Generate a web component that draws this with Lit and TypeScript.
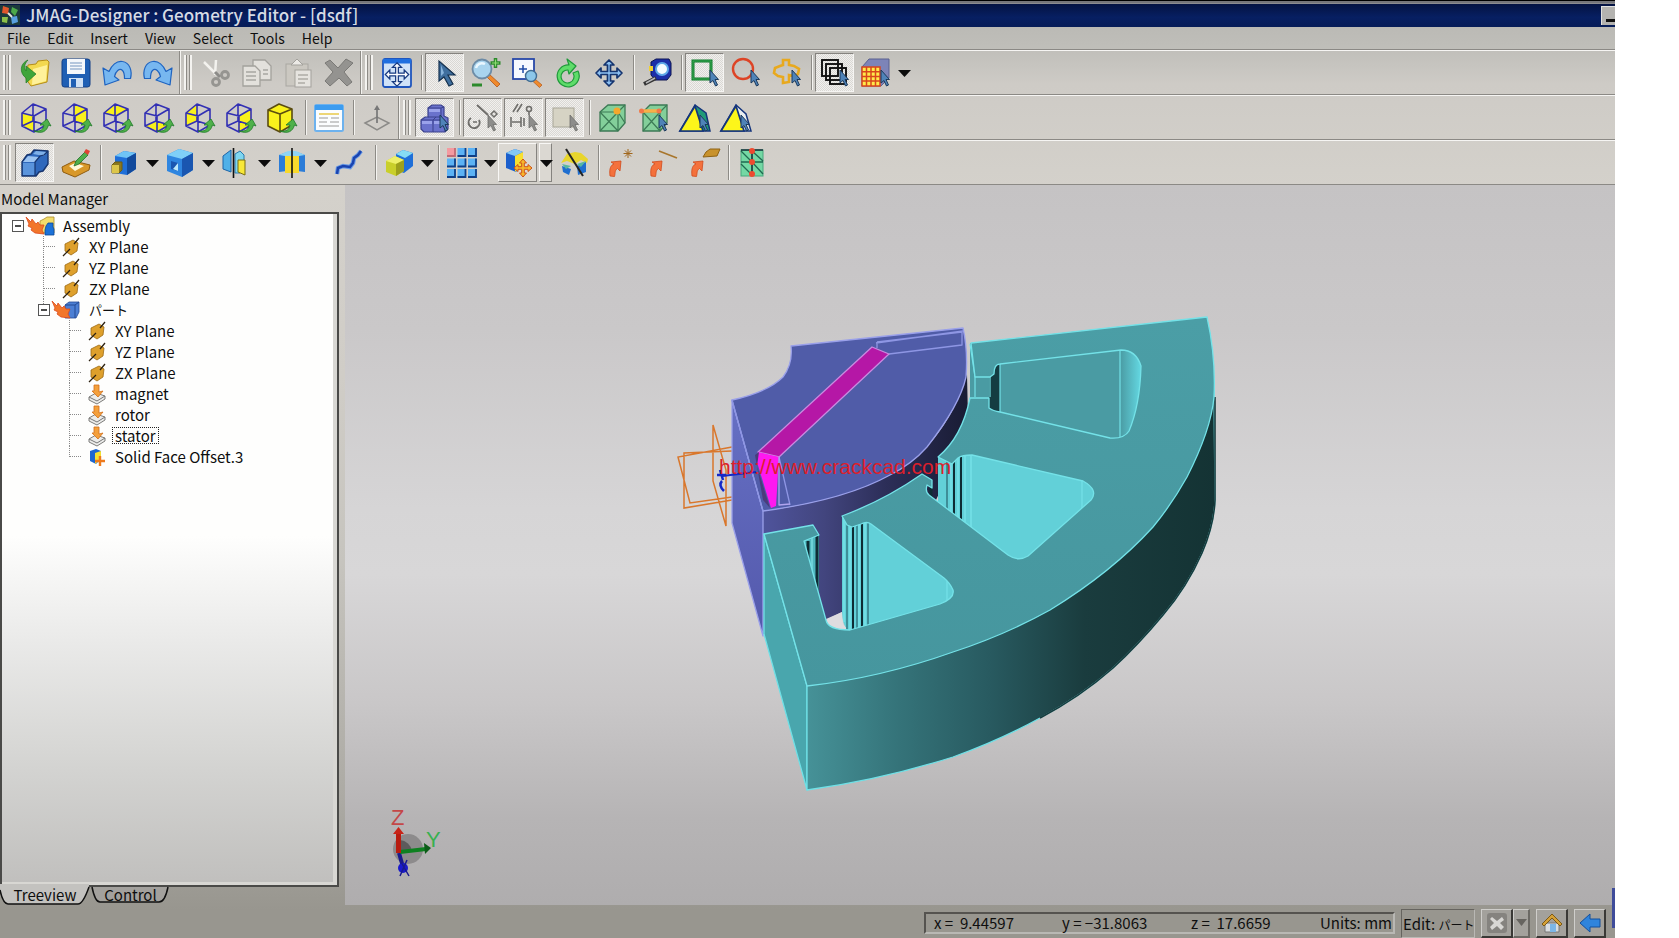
import { LitElement, html, svg, css, nothing } from "lit";
import type { SVGTemplateResult, TemplateResult } from "lit";
import { customElement, property } from "lit/decorators.js";
import { classMap } from "lit/directives/class-map.js";

/* ---------- icon pieces ---------- */

const pointer = svg`<path d="M20 12v13l3-2.500 2.500 5.500 2-1-2.500-5.500h3.500z" fill="#4f83b8" stroke="#1d3a5c" stroke-width="1"/>`;
const greyPointer = svg`<path d="M20 12v13l3-2.500 2.500 5.500 2-1-2.500-5.500h3.500z" fill="#8d8d8b" stroke="#6d6d6b" stroke-width=".8"/>`;
const turnArrow = svg`<path d="M14 28c7 .5 9-1 10-6h-4l7-6 4 7-2.500-1c-2 7-7 9-14.500 6z" fill="#4fb14a" stroke="#1f7a2a" stroke-width=".8"/>`;

const wireCube = (face: SVGTemplateResult) => svg`
  ${face}
  <path d="M2 10 13 1l13 5v16l-12 7-12-6zM2 10l12 3 12-7M14 13v16M13 1v17M2 23l11-5 13 4" fill="none" stroke="#3230b4" stroke-width="1.600" stroke-linejoin="round"/>
  ${turnArrow}`;

const fourWay = svg`<path d="M15 2l5 5h-3.500v6.500H23V10l5 5-5 5v-3.500h-6.500V23H20l-5 5-5-5h3.500v-6.500H7V20l-5-5 5-5v3.500h6.500V7H10z"/>`;

const redArrow = svg`<path d="M3 28c-1-8 1-11 4-12l-3-2 10-1-1 10-2.500-2.500c-3 2-2 4-3 8z" fill="#f4713c" stroke="#d04a1c" stroke-width=".8"/>`;

const icons: Record<string, SVGTemplateResult> = {
  open: svg`<path d="M8 7l8-1 2-3 9-1 2 2-2 20-16 4-5-7z" fill="#f3d84f" stroke="#b58d18"/><path d="M13 11l14-4-1 16-14 4z" fill="#fff19a"/><path d="M8 2C0 5-1 15 6 20v5l10-9-10-8v5c-2-3-2-7 2-11z" fill="#3fa53a" stroke="#1f7a24" stroke-width=".7"/>`,
  save: svg`<rect x="1" y="1" width="28" height="28" rx="2.500" fill="#1f5fb4" stroke="#123f86"/><rect x="6" y="1" width="18" height="15" fill="#f4f7fb"/><path d="M9 5h12M9 8h12M9 11h12" stroke="#9eb6d4" stroke-width="1.500"/><rect x="8" y="20" width="14" height="9" fill="#cfe0f4"/><rect x="10" y="21" width="5" height="8" fill="#1f5fb4"/>`,
  undo: svg`<path d="M1 10l2 17 14-5-4.500-3.500c1-5 5-9 8-6 2 2 2 4 2 8h6c2-8-1-16-8-17-6-1-11 4-13.500 10z" fill="#77b7f0" stroke="#1e63c0" stroke-width="1.200" stroke-linejoin="round"/>`,
  redo: svg`<path d="M29 10l-2 17-14-5 4.500-3.500c-1-5-5-9-8-6-2 2-2 4-2 8h-6c-2-8 1-16 8-17 6-1 11 4 13.500 10z" fill="#77b7f0" stroke="#1e63c0" stroke-width="1.200" stroke-linejoin="round"/>`,
  cut: svg`<path d="M3 4l13 13M15 2l-1 15" stroke="#f3f2ee" stroke-width="2.500"/><g fill="none" stroke="#969591" stroke-width="2.800"><circle cx="15" cy="24" r="3.500"/><circle cx="24" cy="17" r="3.500"/></g><path d="M14 14l5 5" stroke="#8c8b88" stroke-width="3"/>`,
  copy: svg`<g fill="#e3e1dc" stroke="#a3a19c" stroke-width="1.300"><path d="M11 2h12l6 6v14H11z"/><path d="M1 8h12l5 5v15H1z"/></g><path d="M4 14h10M4 18h10M4 22h10M21 12h5M21 16h5" stroke="#a8a6a1" stroke-width="1.500"/>`,
  paste: svg`<rect x="3" y="6" width="22" height="22" fill="#cbc8c1" stroke="#a9a7a2"/><path d="M14 1l6 6H8z" fill="#eceae6" stroke="#a3a19c"/><rect x="12" y="12" width="16" height="17" fill="#e6e4df" stroke="#a3a19c"/><path d="M15 17h10M15 21h10M15 25h7" stroke="#aeaca7" stroke-width="1.400"/>`,
  remove: svg`<path d="M6 2l8 8 8-9 7 4-9 9 8 10-5 4-8-8-9 8-5-5 8-9-8-9z" fill="#949390" stroke="#7a7976" stroke-linejoin="round"/>`,
  fit: svg`<rect x="1" y="1" width="28" height="28" rx="2" fill="#cfe2f8" stroke="#1f55bd" stroke-width="1.800"/><rect x="1" y="1" width="28" height="4.500" fill="#1f6fe0"/><g transform="translate(1.500 3) scale(.9)" fill="#fff" stroke="#173a80" stroke-width="1.400">${fourWay}</g>`,
  select: svg`<path d="M9 3v20l5-4 5 9 4-2-5-9h7z" fill="#3f6f9f" stroke="#14304e" stroke-width="1.200"/><path d="M11 7v11l3-3z" fill="#88b4dc"/>`,
  zoom: svg`<path d="M18 16l11 10-3 3-10-10z" fill="#f08a2c" stroke="#b0561a" stroke-width=".8"/><circle cx="11" cy="11" r="9.500" fill="#a9d4ee" stroke="#6c8ba6" stroke-width="1.800"/><path d="M5 10c1-4 5-6 9-4" stroke="#eaf7ff" stroke-width="2.500" fill="none"/><path d="M24.500 0v10M19.500 5h10" stroke="#2c8a2c" stroke-width="3.500"/><path d="M24.500 1.500v7M21 5h7" stroke="#8fdc72" stroke-width="1.200"/><path d="M1 27h10" stroke="#2c8a2c" stroke-width="3"/>`,
  zoomWindow: svg`<rect x="1" y="1" width="21" height="20" fill="#f6f9ff" stroke="#2748a8" stroke-width="1.800"/><path d="M11 7v8M7 11h8" stroke="#1f49a6" stroke-width="1.500"/><path d="M23 21l7 6-2.500 2.500-7-6.500z" fill="#f08a2c" stroke="#b0561a" stroke-width=".7"/><circle cx="19" cy="18" r="5.500" fill="#8cc7ea" stroke="#416c92" stroke-width="1.400"/>`,
  rotate: svg`<path d="M17 7a11 11 0 1 0 9 6l-5 2a6.500 6.500 0 1 1-5-3l1 4 7-8-9-7z" transform="translate(-1 0)" fill="#5fdc6a" stroke="#1f9a3a" stroke-width="1.200" stroke-linejoin="round"/>`,
  pan: svg`<g fill="#8cc0f2" stroke="#14336e" stroke-width="1.700" stroke-linejoin="round">${fourWay}</g>`,
  measure: svg`<path d="M9 4l5-3h13l2 4v12l-4 5H13l-4-5z" fill="#1c2fa8" stroke="#0c1550"/><circle cx="20" cy="11" r="6" fill="#f5fbff" stroke="#5fa8e8" stroke-width="2"/><rect x="7" y="8" width="4" height="5" fill="#f0d030"/><path d="M14 20L2 26" stroke="#333" stroke-width="4"/><path d="M13 20L4 25" stroke="#b8b8b8" stroke-width="1.500"/>`,
  rect: svg`<rect x="3" y="3" width="18" height="18" fill="none" stroke="#0f7a2a" stroke-width="3"/><rect x="3" y="3" width="18" height="18" fill="none" stroke="#48b860" stroke-width=".8"/>${pointer}`,
  circle: svg`<circle cx="12" cy="11" r="10" fill="none" stroke="#dd4426" stroke-width="2.400"/>${pointer}`,
  poly: svg`<path d="M11 2h6v5l5 1 5 3-1 5-4 2-5-1v7l-6 1v-6l-5-1-4-3 1-5 5-2 3-1z" fill="none" stroke="#e8a91e" stroke-width="2.600"/>${pointer}`,
  layers: svg`<g fill="none" stroke="#111" stroke-width="1.900"><rect x="2" y="2" width="16" height="16"/><rect x="6" y="6" width="16" height="16"/><rect x="10" y="10" width="16" height="16"/></g>${pointer}`,
  mesh: svg`<path d="M1 9l7-8h20v19l-8 8H1z" fill="#7d84b8" stroke="#5a618f"/><rect x="1" y="9" width="18" height="19" fill="#ffe94a" stroke="#d8461c" stroke-width="1.500"/><path d="M5.500 9v19M10 9v19M14.500 9v19M1 13.700h18M1 18.500h18M1 23h18" stroke="#d8461c" stroke-width="1.500"/>${pointer}`,

  front: wireCube(svg`<path d="M2 10l12 3v16l-12-6z" fill="#f9f11c"/>`),
  back: wireCube(svg`<path d="M13 1l13 5v16l-13-4z" fill="#f9f11c"/>`),
  top: wireCube(svg`<path d="M2 10 13 1l13 5-12 7z" fill="#f9f11c"/>`),
  bottom: wireCube(svg`<path d="M2 23l11-5 13 4-12 7z" fill="#f9f11c"/>`),
  left: wireCube(svg`<path d="M2 10 13 1v17l-11 5z" fill="#f9f11c"/>`),
  right: wireCube(svg`<path d="M14 13l12-7v16l-12 7z" fill="#f9f11c"/>`),
  iso: svg`<path d="M2 7 13 1l13 5v16l-12 7-12-6z" fill="#f9f11c"/><path d="M2 7 13 1l13 5v16l-12 7-12-6zM2 7l12 4 12-5M14 11v18" fill="none" stroke="#5a4c10" stroke-width="1.600" stroke-linejoin="round"/>${turnArrow}`,
  list: svg`<rect x="1" y="2" width="28" height="26" rx="1.500" fill="#fbfdff" stroke="#6db2ee" stroke-width="2"/><rect x="1" y="2" width="28" height="5" fill="#3c9cf0"/><path d="M5 11h20" stroke="#e8c84a" stroke-width="1.500"/><path d="M5 15h9M17 15h8M5 19h8M16 19h9M5 23h20" stroke="#9a9a9a" stroke-width="1.200"/>`,
  normal: svg`<path d="M3 20l12-6 12 6-12 7z" fill="none" stroke="#8c8b88" stroke-width="1.500"/><path d="M15 20V5" stroke="#777" stroke-width="1.700"/><path d="M12 7l3-5 3 5z" fill="#777"/>`,
  solids: svg`<path d="M8 5l4-3h9l3 2v9l4 2v11l-3 3H4l-3-3V17l4-3h3z" fill="#6a72cc" stroke="#3a418c" stroke-width="1.200"/><path d="M8 5h13v9H8M21 5l3-1M1 17h12v12M13 17h12M13 17l3-3M25 17v12" fill="none" stroke="#3a418c"/><path d="M9 6h11v3H9zM2 18h10v3H2zM14 18h10v3H14z" fill="#9aa2ea"/>${pointer}`,
  sketchFilter: svg`<g fill="none" stroke="#6f6e6b" stroke-width="2"><path d="M3 15a5.500 5.500 0 1 0 8 2"/><path d="M9 2l11 10"/><path d="M5 19h4M23 11l3-3 3 3-3 3z" stroke-width="1.500"/></g>${greyPointer}`,
  constraintFilter: svg`<g fill="none" stroke="#6f6e6b" stroke-width="1.600"><path d="M4 9l5-8M8 9l5-8M2 14v10M12 14v10M3 19h9M15 15v8"/><circle cx="20" cy="6" r="2.500"/><path d="M20 8v4"/></g>${greyPointer}`,
  regionFilter: svg`<rect x="3" y="5" width="21" height="19" fill="#d6d3c4" stroke="#a7a597"/>${greyPointer}`,
  vertex: svg`<path d="M2 9l8-7h17v18l-7 8H2z" fill="#83cf9a" stroke="#3c7a55" stroke-width="1.300"/><path d="M2 9h18v19M20 9l7-7M2 9l18 19M20 9L2 28M20 9l7 11" fill="none" stroke="#3c7a55" stroke-width="1.200"/><circle cx="19" cy="8" r="3.500" fill="#f6a82c"/>`,
  edge: svg`<path d="M4 9l7-7h17v18l-7 8H4z" fill="#83cf9a" stroke="#3c7a55" stroke-width="1.300"/><path d="M4 9h17v19M21 9l7-7M4 9l17 19M21 9L4 28" fill="none" stroke="#3c7a55" stroke-width="1.200"/><path d="M2 8h18" stroke="#f8b048" stroke-width="3.500"/><circle cx="2.500" cy="8" r="2.500" fill="#f27848"/><circle cx="20" cy="8" r="2.500" fill="#f27848"/>${pointer}`,
  face: svg`<path d="M15 2l11 8 4 18H0z" fill="#1f9a78" stroke="#15357c" stroke-width="1.500"/><path d="M15 3l8 25H0z" fill="#fdf61a" stroke="#15357c" stroke-width="1.700"/>${pointer}`,
  faceAll: svg`<path d="M15 2l10 9 5 17H0z" fill="#e9eef0" stroke="#15357c" stroke-width="1.500"/><path d="M15 3l8 25H0z" fill="#fdf61a" stroke="#15357c" stroke-width="1.700"/>${pointer}`,

  part: svg`<path d="M2 14l5-7 4-1 3-4 14 1v13l-5 7-4 1-3 4H2z" fill="#2f68bc" stroke="#17356e" stroke-width="1.400" stroke-linejoin="round"/><path d="M3 14l5-6 11 1-4 5z" fill="#9cc4f2"/><path d="M13 6l3-3 11 1-3 4z" fill="#7fb0e8"/><path d="M3 15h12v12H3z" fill="#5a94dc"/><path d="M15 28V14l5-6 4-1 4-4" fill="none" stroke="#17356e" stroke-width="1.200"/>`,
  sketch: svg`<path d="M1 19l12-6 16 4-1 5-14 7-12-5z" fill="#d8982a" stroke="#8f5c10"/><path d="M8 18l6-3 9 3-9 5z" fill="#fff8d8"/><path d="M13 18l2-5 9-9 3 3-9 9z" fill="#4fae4a" stroke="#21702a" stroke-width=".8"/><path d="M23 4l2-3 4 2-2 4z" fill="#e04434"/>`,
  extrude: svg`<path d="M6 8l9-5 12 2v16l-9 6-12-2z" fill="#1f6fd8"/><path d="M6 8l9-5 12 2-9 5z" fill="#6fc4f6"/><path d="M18 10l9-5v16l-9 6z" fill="#124a9c"/><path d="M3 17l3-3h7v8l-3 3H3z" fill="#8a7820" stroke="#6e5c10"/><path d="M3 17h7v8H3z" fill="#dcc64a"/>`,
  boxCut: svg`<path d="M2 7l12-6 14 4v17l-11 7L2 23z" fill="#2f86e0"/><path d="M2 7l12-6 14 4-11 6z" fill="#7fd0f8"/><path d="M17 11l11-6v17l-11 7z" fill="#1a56b0"/><path d="M6 13l7 2v8l-7-2z" fill="#1a56b0"/><path d="M13 15v8l-5-2z" fill="#bde8fa"/>`,
  mirror: svg`<path d="M2 8l8-6v22l-8-3z" fill="#4fb0e8" stroke="#1d64a8"/><path d="M14 6l5-3 4 4v8l-4 10h-5z" fill="#7fd6f0" stroke="#2a7ab0"/><path d="M17 12h7v15l-7-3z" fill="#f8e838" stroke="#7a6e10"/><path d="M12.500 0v30" stroke="#111" stroke-width="1.600"/>`,
  pattern: svg`<path d="M2 7l8-3v19l-8 1zM20 4l8 3v17l-8-1z" fill="#2b7cd8"/><path d="M8 5h14v20H8z" fill="#f8d92c"/><path d="M2 7l9-4h8l9 4-6 1H8z" fill="#8fd4f4"/><path d="M15 0v30" stroke="#111" stroke-width="1.600"/>`,
  curve: svg`<path d="M4 26l1-6 5-2 7 1 3-4 1-5 4-3 3-4" fill="none" stroke="#6a9be6" stroke-width="4.500"/><path d="M4 26l1-6 5-2 7 1 3-4 1-5 4-3 3-4" fill="none" stroke="#1a44b0" stroke-width="2.500"/>`,
  blend: svg`<path d="M12 6l7-4 10 3v13l-9 7-8-3z" fill="#1f6fd8"/><path d="M12 6l7-4 10 3-8 5z" fill="#86dcf4"/><path d="M2 13l9-5 9 4v11l-8 5-10-4z" fill="#c9cf2a"/><path d="M2 13l9-5 9 4-8 4z" fill="#eef06a"/><path d="M12 16l8-4v11l-8 5z" fill="#9da01c"/>`,
  grid: svg`${[0, 1, 2].map((r) => [0, 1, 2].map((c) => svg`<rect x="${c * 10.5}" y="${r * 10.5}" width="8.500" height="8.500" fill="${r + c ? "#5cb2f4" : "#f49aa0"}"/><path d="M${c * 10.5} ${8 + r * 10.5}h8v-8" fill="none" stroke="${r + c ? "#0f3f86" : "#c06a74"}" stroke-width="1.800"/>`))}`,
  offset: svg`<path d="M3 5l9-4 8 3v12l-7 8-10-4z" fill="#1c5fcc"/><path d="M3 5l9-4 8 3-8 4z" fill="#84c8f4"/><path d="M12 8l8-4v12l-8 8z" fill="#f8e030"/><path d="M20 11l3.500 4h-2.200v3.700h3.700v-2.200l4 3.500-4 3.500v-2.200h-3.700v3.700h2.200l-3.500 4-3.500-4h2.200v-3.700h-3.700v2.200l-4-3.500 4-3.500v2.200h3.700v-3.700h-2.200z" fill="#f6b82c" stroke="#d05018" stroke-width="1"/>`,
  cutPlane: svg`<path d="M2 15l6-9 8-2 6 1 7 6-1 4-6-3-6 4-8-3z" fill="#e8d52c"/><path d="M3 18l9 3-2 6-6-3zM18 18l9-4v10l-8 3z" fill="#1f6fd0"/><path d="M3 16l9 2-5 3zM18 16l9-3-5 6z" fill="#58b8a0"/><path d="M7 1l17 27" stroke="#222" stroke-width="2"/>`,
  refPoint: svg`${redArrow}<path d="M21 1v9M16.500 5.500h9M18 2.500l6 6M24 2.500l-6 6" stroke="#a0661c" stroke-width="1"/>`,
  refAxis: svg`${redArrow}<path d="M11 3l18 7" stroke="#a8762c" stroke-width="1.600"/>`,
  refPlane: svg`${redArrow}<path d="M17 4l4-3h10l-3 7-14 1z" fill="#c8922c" stroke="#8f6314"/>`,
  meshCheck: svg`<rect x="4" y="2" width="22" height="26" fill="#74d8a4" stroke="#46a87c"/><path d="M4 14h22M4 3l11 11M4 16l11 11M15 14l11 12M15 3l11 10" stroke="#1f6a50" stroke-width="1.300"/><path d="M4 2h22M15 2v26" stroke="#15303a" stroke-width="1.600"/><g fill="#ee4a30"><circle cx="15" cy="3" r="3"/><circle cx="15" cy="14" r="3"/><circle cx="15" cy="26" r="3"/></g>`,
};

interface Tool {
  id?: string;
  label?: string;
  state?: "pressed" | "raised" | "";
  drop?: boolean;
  sep?: "normal" | "wide";
}

const t = (id: string, label: string, state: Tool["state"] = ""): Tool => ({ id, label, state });
const drop = (label: string, state: Tool["state"] = ""): Tool => ({ drop: true, label, state });
const sep: Tool = { sep: "normal" };
const wideSep: Tool = { sep: "wide" };

const toolbars: Tool[][][] = [
  [
    [t("open", "Open"), t("save", "Save"), t("undo", "Undo"), t("redo", "Redo")],
    [t("cut", "Cut"), t("copy", "Copy"), t("paste", "Paste"), t("remove", "Delete")],
    [
      t("fit", "Fit"), sep, t("select", "Select", "pressed"), t("zoom", "Zoom"), t("zoomWindow", "Zoom window"),
      t("rotate", "Rotate"), t("pan", "Pan"), sep, t("measure", "Measure"), sep, t("rect", "Rectangle select", "pressed"),
      t("circle", "Circle select"), t("poly", "Polygon select"), sep, t("layers", "Select through", "pressed"),
      t("mesh", "Mesh select"), drop("Mesh select options"),
    ],
  ],
  [
    [
      t("front", "Front view"), t("back", "Back view"), t("top", "Top view"), t("bottom", "Bottom view"),
      t("left", "Left view"), t("right", "Right view"), t("iso", "Isometric view"), sep, t("list", "View list"), sep,
      t("normal", "Normal to plane"),
    ],
    [
      t("solids", "Select solids", "pressed"), sep, t("sketchFilter", "Select sketch", "pressed"),
      t("constraintFilter", "Select constraint", "pressed"), t("regionFilter", "Select region", "pressed"), sep,
      t("vertex", "Select vertex"), t("edge", "Select edge"), t("face", "Select face"), t("faceAll", "Select all faces"),
    ],
  ],
  [
    [
      t("part", "Edit part", "pressed"), t("sketch", "Edit sketch"), sep, t("extrude", "Extrude"), drop("Extrude options"),
      t("boxCut", "Cut"), drop("Cut options"), t("mirror", "Mirror"), drop("Mirror options"), t("pattern", "Pattern"),
      drop("Pattern options"), t("curve", "Curve"), wideSep, t("blend", "Boolean"), drop("Boolean options"), sep,
      t("grid", "Array"), drop("Array options"), t("offset", "Face offset", "raised"), drop("Face offset options", "raised"),
      t("cutPlane", "Divide"), sep, t("refPoint", "Reference point"), t("refAxis", "Reference axis"),
      t("refPlane", "Reference plane"), sep, t("meshCheck", "Check mesh"),
    ],
  ],
];

@customElement("tool-band")
class ToolBand extends LitElement {
  @property({ attribute: false }) tools: Tool[] = [];
  @property({ type: Boolean }) last = false;

  static styles = css`
    :host { display: flex; align-items: center; padding: 0 2px 0 3px; border-right: 1px solid #8d8b86; box-shadow: 1px 0 #f4f3f0; margin-right: 1px; }
    :host([last]) { border-right: 0; box-shadow: none; flex: 1; }
    .grip { width: 8px; height: 35px; margin-right: 4px; box-sizing: border-box; border: solid #f4f3f0; border-width: 0 2px; background: linear-gradient(90deg, #8d8b86 0 1px, #d2cfca 1px 3px, #8d8b86 3px); }
    .set { display: flex; align-items: center; gap: 2px; }
    button { font: inherit; padding: 0; margin: 0; border: 1px solid transparent; background: none; width: 39px; height: 39px; display: grid; place-items: center; }
    button svg { width: 30px; height: 30px; overflow: visible; }
    button.pressed { border-color: #85837f #f6f5f3 #f6f5f3 #85837f; background: repeating-conic-gradient(#f1f0ee 0 25%, #dad8d4 0 50%) 0 0 / 2px 2px; }
    button.raised { border-color: #f8f7f5 #85837f #85837f #f8f7f5; background: #dbd8d2; }
    button.drop { width: 13px; }
    button.drop svg { width: 13px; height: 8px; }
    .sep { width: 1px; height: 35px; margin-left: 3px; background: #8d8b86; box-shadow: 1px 0 #f4f3f0; margin-right: 1px; }
    .sep.wide { margin-left: 6px; }
  `;

  private item(tool: Tool) {
    if (tool.sep) return html`<span class=${classMap({ sep: true, wide: tool.sep === "wide" })}></span>`;
    const classes = { drop: !!tool.drop, pressed: tool.state === "pressed", raised: tool.state === "raised" };
    return html`<button class=${classMap(classes)} aria-label=${tool.label ?? ""} title=${tool.label ?? ""}>
      ${tool.drop
        ? html`<svg viewBox="0 0 13 8"><path d="M0 1h13L6.500 8z" fill="#0c0c0c" /></svg>`
        : html`<svg viewBox="0 0 30 30">${icons[tool.id!]}</svg>`}
    </button>`;
  }

  render() {
    return html`<span class="grip"></span><div class="set">${this.tools.map((x) => this.item(x))}</div>`;
  }
}

/* ---------- model tree ---------- */

interface TreeNode { name: string; icon: "assembly" | "part" | "plane" | "solid" | "offset"; focused?: boolean; children?: TreeNode[]; }

const planes: TreeNode[] = ["XY Plane", "YZ Plane", "ZX Plane"].map((name) => ({ name, icon: "plane" as const }));
const model: TreeNode = {
  name: "Assembly", icon: "assembly",
  children: [
    ...planes,
    {
      name: "パート", icon: "part",
      children: [
        ...planes,
        { name: "magnet", icon: "solid" },
        { name: "rotor", icon: "solid" },
        { name: "stator", icon: "solid", focused: true },
        { name: "Solid Face Offset.3", icon: "offset" },
      ],
    },
  ],
};

const flame = svg`<path d="M0 0l5 5 1-3 4 5 2-2 2 3 4 0-2 5 2 4-9-1-4-3 1-2-4-2 1-2z" fill="#f2762a" stroke="#dd4a1c" stroke-width=".8"/>`;
const treeIcons: Record<TreeNode["icon"], SVGTemplateResult> = {
  assembly: svg`<path d="M14 4l4-2 3-2h7v16H14z" fill="#f2dc6c" stroke="#a98c28" stroke-width=".8"/>${flame}<path d="M20 9l2-3h5v4l1 2v6h-9v-5z" fill="#1c72d8" stroke="#0d4694" stroke-width=".8"/>`,
  part: svg`<path d="M13 4l4-3h10v10l-3 6H13z" fill="#4c7fd4" stroke="#234a94" stroke-width=".8"/><path d="M13 4h10l4-3M23 4v13" fill="none" stroke="#234a94"/>${flame}`,
  plane: svg`<path d="M13 6l8-4 5 3-1 8-6 4-6-4z" fill="#dea02c" stroke="#9c6a14" stroke-width=".8"/><path d="M11 18l7-7M22 6l5-6" stroke="#2d2212" stroke-width="1.300"/>`,
  solid: svg`<path d="M11 12l7-4 9 3v3l-8 5-8-4z" fill="#ececea" stroke="#6e6e6c" stroke-width=".9"/><path d="M11 12l8 4 8-5" fill="none" stroke="#777"/><path d="M16 0h5v7l4-1-5 6-6-6h2z" fill="#f4a03c" stroke="#d2701a" stroke-width=".8"/>`,
  offset: svg`<path d="M12 3l6-2 5 2v8l-5 5-6-3z" fill="#1c66d0"/><path d="M17 5l6-2v8l-6 5z" fill="#f4e030"/><path d="M22 8v10M17 13h10" stroke="#ee7a1c" stroke-width="2.400"/>`,
};

@customElement("model-tree")
class ModelTree extends LitElement {
  static styles = css`
    :host { display: block; font-size: 15px; line-height: 21px; color: #0e0e0e; }
    ul { list-style: none; margin: 0; padding: 0; }
    ul ul { padding-left: 26px; }
    .row { display: flex; height: 21px; align-items: center; padding-left: 7px; white-space: nowrap; }
    .link { width: 17px; height: 21px; overflow: visible; flex: none; }
    .glyph { width: 28px; height: 18px; overflow: visible; flex: none; }
    .name { margin-left: 6px; padding: 0 2px; line-height: 15px; border: 1px dotted transparent; }
    .name.focused { border-color: #222; }
    .name.jp { font-size: 13px; }
  `;

  private node(n: TreeNode, last: boolean, root = false): TemplateResult {
    const jp = /[^\x00-\x7f]/.test(n.name);
    return html`<li role="treeitem">
      <div class="row">
        <svg class="link" viewBox="0 0 17 21">
          <g fill="none" stroke="#8a8a8a" stroke-dasharray="1 1">
            ${root ? nothing : svg`<path d="M8.500 0V${last ? 11 : 21}"/>`}
            ${n.children ? nothing : svg`<path d="M9 10.500H21"/>`}
          </g>
          ${n.children ? svg`<rect x="3.500" y="5.500" width="11" height="11" fill="#fff" stroke="#555"/><path d="M6 11h6" stroke="#111" stroke-width="1.500"/>` : nothing}
        </svg>
        <svg class="glyph" viewBox="0 0 28 18">${treeIcons[n.icon]}</svg>
        <span class=${classMap({ name: true, focused: !!n.focused, jp })}>${n.name}</span>
      </div>
      ${n.children ? html`<ul role="group">${n.children.map((c, i, a) => this.node(c, i === a.length - 1))}</ul>` : nothing}
    </li>`;
  }

  render() {
    return html`<ul role="tree">${this.node(model, true, true)}</ul>`;
  }
}

/* ---------- 3D viewport ---------- */

@customElement("model-view")
class ModelView extends LitElement {
  static styles = css`
    :host { display: block; min-width: 0; min-height: 0; background: linear-gradient(#c5c3c4 0%, #cac8c9 20%, #d6d5d6 45%, #d8d7d8 54%, #c9c7c8 72%, #b6b4b5 88%, #afadae 100%); }
    svg { display: block; width: 100%; height: 100%; }
    .watermark { font: 21px "Liberation Sans", Arial, sans-serif; fill: #dc1f2c; }
    .axis { font: 22px "Liberation Sans", Arial, sans-serif; }
  `;

  render() {
    return html`<svg viewBox="345 185 1270 720" preserveAspectRatio="xMidYMid meet" role="img" aria-label="Rotor, magnet and stator">
      <defs>
        <linearGradient id="rim" gradientUnits="userSpaceOnUse" x1="806" y1="0" x2="1215" y2="0">
          <stop offset="0" stop-color="#469298" /><stop offset=".22" stop-color="#35747a" /><stop offset=".45" stop-color="#285a60" />
          <stop offset=".68" stop-color="#1a3c3e" /><stop offset="1" stop-color="#143334" />
        </linearGradient>
        <linearGradient id="rotorSide" gradientUnits="userSpaceOnUse" x1="763" y1="0" x2="968" y2="0">
          <stop offset="0" stop-color="#4f549c" /><stop offset=".3" stop-color="#42457e" /><stop offset=".6" stop-color="#2c2e58" /><stop offset="1" stop-color="#191c34" />
        </linearGradient>
        <linearGradient id="leftFace" x1="0" y1="0" x2="0" y2="1"><stop offset="0" stop-color="#6670c4" /><stop offset="1" stop-color="#5459ac" /></linearGradient>
        <linearGradient id="topFace" x1="0" y1="0" x2="0" y2="1"><stop offset="0" stop-color="#4b9ea6" /><stop offset="1" stop-color="#46969e" /></linearGradient>
        <linearGradient id="fillet" x1="0" y1="0" x2="1" y2="0"><stop offset="0" stop-color="#4a9ba3" /><stop offset=".7" stop-color="#62d4de" /><stop offset="1" stop-color="#5cc8d2" /></linearGradient>
      </defs>

      <g fill="none" stroke="#d9772c" stroke-width="1.500">
        <path d="M732 447 678 457l12 46 42-6M732 451l-48 2v55l48-8M713 425v56l13 45v-56z" />
      </g>

      <g stroke-linejoin="round" stroke-width="1.300">
        <path d="M763 511C815 505 858 490 890 475 926 455 945 428 960 395L967 374 968 420 950 470 936 500 845 540 842 612 826 620 763 634z" fill="url(#rotorSide)" />
        <path d="M732 400L763 511V636L732 523z" fill="url(#leftFace)" stroke="#9aa0ea" />
        <path d="M791 346L963 328Q968 350 966 377Q960 405 927 447Q912 464 890 475Q845 500 763 511L732 400Q768 392 783 377Q793 364 791 346z" fill="#505ca8" stroke="#9aa0ea" />
        <path d="M732 400L763 511M877 342L962 332V345L889 354M877 342V348M779 457L790 505M876 343L963 331" fill="none" stroke="#8e96e4" />
        <path d="M872 347L889 354 779 457 758 452z" fill="#b517a6" stroke="#c98be0" />
        <path d="M758 452L779 457 776 506 771 508 757 462z" fill="#ff18f0" />
        <path d="M755 455L759 452 757 466 770 508 763 500z" fill="#4a3c7c" />
        <path d="M779 457V505L790 504" fill="none" stroke="#b0a4ee" />
      </g>

      <g stroke-linejoin="round" stroke-width="1.300" stroke="#6fe0e6">
        <path d="M764 534L807 686V790L764 634z" fill="#49a6ad" />
        <path d="M807 670L1180 450 1214 390 1215 500Q1214 525 1202 553 1187 587 1163 615 1138 645 1113 668 1080 697 1040 718 1000 740 953 757 880 780 807 790z" fill="url(#rim)" />
      </g>
      <path d="M1215 397V500Q1214 525 1202 553 1187 587 1163 615 1138 645 1113 668 1080 697 1040 718" fill="none" stroke="#183a3c" stroke-width="1.600" />

      <g fill="#62d0d8">
        <path d="M842 516L868 515 960 578 962 597 940 612 848 636 842 618z" />
        <path d="M938 457L972 450 1092 475 1105 492 1028 568 1008 566 938 513z" />
        <path d="M803 538L819 534V600z" fill="#4fb6be" />
        <path d="M970 343L1000 360 1121 343 1150 370 1128 445 993 418 970 398z" fill="#4a9ba3" />
        <path d="M826 619L842 612 843 624 848 630 846 634H830z" fill="#dedcdf" />
      </g>
      <path d="M1120 345L1142 350 1148 368 1138 432 1120 444z" fill="url(#fillet)" />
      <path d="M989 366L1000 360V414L989 410z" fill="#143c42" />
      <g fill="none" stroke-width="2">
        <path d="M853 522V630M862 520V632M954 462V516M961 452V522" stroke="#0e2c34" />
        <path d="M857 522V632M847 522V630M868 520V630M947 460V510" stroke="#3e8e98" />
        <path d="M850 522V632M859 522V632M865 520V630M844 520V622M951 460V513M958 455V520M965 452V524M971 452V528" stroke="#7eeaf0" stroke-width="1" />
        <path d="M808 541V560M817 536V592" stroke="#0e2c34" stroke-width="3" />
        <path d="M812 538V574" stroke="#8cecf0" stroke-width="1" />
        <path d="M931 484V500" stroke="#0e2c34" stroke-width="3" />
        <path d="M970 344L975 377V397M990 377V397M1000 360V414M1120 346V440M1082 478V513M947 576V604" stroke="#74e2e8" stroke-width="1.200" />
      </g>

      <path
        d="M764 534L813 525 819 535 804 541 826 620Q828 630 850 630L940 604Q955 598 953 590 950 583 944 578L871 524Q867 521 861 524L852 527 847 525 842 516Q885 500 922 474L932 480V488L927 485Q925 492 929 495L1008 555Q1018 562 1028 556L1091 500Q1099 490 1083 481L972 455Q962 455 958 458L952 464 938 457Q962 437 970 398H989V408Q993 411 1000 412L1110 438Q1124 439 1129 431 1140 405 1141 366 1136 350 1121 350L1000 364Q994 364 994 374L990 377H975L971 343 1207 317Q1216 357 1214 397 1211 430 1187 477 1172 504 1153 527 1112 572 1050 610 1005 635 953 652 880 678 807 686z"
        fill="url(#topFace)" stroke="#74e2e8" stroke-width="1.300" stroke-linejoin="round" />

      <path d="M756 472L722 476" stroke="#1428c8" stroke-width="2" />
      <path d="M717 475h9M720 470l3 10M722 481q-4 4 2 10" stroke="#1428c8" stroke-width="2.500" fill="none" />
      <text class="watermark" x="719" y="474">http://www.crackcad.com</text>

      <circle cx="408" cy="849" r="15" fill="#8d8b8c" />
      <path d="M400 853V840a13 13 0 0 1 12 11z" fill="#5d5b5c" />
      <path d="M399 853l4 14" stroke="#1a1a8c" stroke-width="4" />
      <circle cx="403" cy="868" r="5" fill="#1a1acc" />
      <path d="M400 876l7-16M401 862l8 14" stroke="#1a1a8c" stroke-width="1.500" />
      <path d="M400 852l26-3" stroke="#0e8020" stroke-width="4" />
      <path d="M424 843l7 5-6 6z" fill="#0c5c18" />
      <path d="M398.500 853V832" stroke="#b81c10" stroke-width="5" />
      <path d="M393 834l5.500-7 5.500 7z" fill="#c82418" />
      <text class="axis" x="391" y="825" fill="#c44848">Z</text>
      <text class="axis" x="426" y="847" fill="#38b050">Y</text>
    </svg>`;
  }
}

/* ---------- application window ---------- */

@customElement("app-root")
class AppRoot extends LitElement {
  static styles = css`
    :host { display: block; height: 100vh; box-sizing: border-box; padding-right: 64px; background: #fff; font-family: "Noto Sans CJK JP", sans-serif; font-size: 15px; color: #0e0e0e; overflow: hidden; }
    .window { height: 100%; display: flex; flex-direction: column; background: linear-gradient(#b6b5b0 0, #bfbeb9 5%, #cecbc6 9%, #d4d1cb 20%, #d0cdc7 40%, #c6c4be 60%, #acaaa4 85%, #98968f 97%); overflow: hidden; }
    .title { flex: none; height: 24px; border-top: 2px solid #76767a; box-shadow: inset 0 1px #8c8c90; background: linear-gradient(#041240, #071f62 60%, #061c58); color: #d6dbe4; display: flex; align-items: center; gap: 6px; overflow: hidden; }
    .title svg { width: 20px; height: 20px; }
    .title h1 { font-size: 17px; line-height: 20px; font-weight: 500; margin: 0; flex: 1; white-space: nowrap; }
    .title button { width: 14px; height: 19px; padding: 0 0 3px 4px; display: flex; align-items: flex-end; background: #b4b3b0; border: solid #e2e2e0; border-width: 1px 0 0 1px; }
    .title button i { width: 10px; height: 3px; background: #111; }
    .black { flex: none; height: 1px; background: #000; }
    nav { flex: none; display: flex; gap: 17px; height: 22px; padding-left: 7px; border-bottom: 1px solid #8b8985; }
    nav a { color: inherit; text-decoration: none; line-height: 22px; font-size: 14px; }
    .bar { flex: none; display: flex; height: 43px; border-top: 1px solid #f6f5f3; border-bottom: 1px solid #8b8985; }
    .work { flex: 1; min-height: 0; display: grid; grid-template-columns: 345px minmax(0, 1fr); }
    .side { display: flex; flex-direction: column; min-height: 0; }
    .side h2 { flex: none; margin: 0; padding-left: 1px; font-size: 15px; font-weight: 400; line-height: 27px; }
    .pane { flex: 1; min-height: 0; margin: 0 6px 0 0; border: 2px solid #4a4a48; box-shadow: inset -4px -3px #d8d7d3; background: linear-gradient(#fefefd 0 48%, #ececeb 62%, #d4d4d2 82%, #c0bfbd); padding-top: 1px; }
    .tabs { flex: none; display: flex; height: 18px; gap: 1px; }
    .tabs button { font: inherit; color: inherit; border: 0; padding: 0; margin: 0; background: none; display: grid; width: 90px; height: 18px; }
    .tabs button:last-child { width: 79px; height: 17px; }
    .tabs svg { grid-area: 1 / 1; width: 100%; height: 100%; overflow: visible; }
    .tabs span { grid-area: 1 / 1; line-height: 16px; z-index: 1; }
    .status { flex: none; height: 33px; display: flex; justify-content: flex-end; align-items: center; gap: 6px; box-sizing: border-box; padding-top: 3px; }
    .read { display: grid; grid-template-columns: 128px 129px 129px auto; width: 471px; height: 22px; box-sizing: border-box; padding-left: 8px; line-height: 18px; border: 2px solid; border-color: #55534f #b9b8b4 #b9b8b4 #55534f; white-space: nowrap; }
    .edit { width: 74px; height: 29px; box-sizing: border-box; padding-left: 1px; line-height: 27px; border: 1px solid; border-color: #66645f #b9b8b4 #b9b8b4 #66645f; white-space: nowrap; }
    .edit small { font-size: 12px; }
    .status button { padding: 0; margin: 0; height: 29px; width: 32px; display: grid; place-items: center; background: #a3a19c; border: solid; border-width: 1px 2px 2px 1px; border-color: #cfcecb #3a3936 #3a3936 #cfcecb; }
    .status button svg { width: 22px; height: 22px; }
    .pair { display: flex; }
    .status .pair button:last-child { width: 17px; border-color: #cfcecb #6b6964 #6b6964 #cfcecb; }
    .pair button:last-child svg { width: 11px; height: 7px; }
    .edge { width: 3px; align-self: stretch; margin: -20px 0 10px; background: #3f4c9a; }
  `;

  render() {
    return html`<div class="window">
      <div class="black"></div>
      <header class="title">
        <svg viewBox="0 0 20 20"><rect width="20" height="20" fill="#1c3a3c" /><path d="M3 1l6 2-1 6-6-1z" fill="#e0572c" /><path d="M12 2l6 3-3 6-4-4z" fill="#4caa4a" /><path d="M11 12l6-1 1 6-6 2z" fill="#58a0e0" /><path d="M2 12l6 0-1 6-5-1z" fill="#8cc04a" /><path d="M8 8l4 4" stroke="#e8e8e0" stroke-width="2" /></svg>
        <h1>JMAG-Designer : Geometry Editor - [dsdf]</h1>
        <button aria-label="Minimize"><i></i></button>
      </header>
      <nav>${["File", "Edit", "Insert", "View", "Select", "Tools", "Help"].map((m) => html`<a href="#">${m}</a>`)}</nav>
      ${toolbars.map((bands) => html`<div class="bar" role="toolbar">
        ${bands.map((b, i) => html`<tool-band .tools=${b} ?last=${i === bands.length - 1}></tool-band>`)}
      </div>`)}
      <main class="work">
        <section class="side">
          <h2>Model Manager</h2>
          <div class="pane"><model-tree></model-tree></div>
          <div class="tabs">
            <button><svg viewBox="0 0 90 18" preserveAspectRatio="none"><path d="M0 -3V3Q3 17 8 17H78Q83 17 89 -1V-3z" fill="#c3c2bf" /><path d="M0 3Q3 17 8 17H78Q83 17 89 0" fill="none" stroke="#111" stroke-width="1.500" /></svg><span>Treeview</span></button>
            <button><svg viewBox="0 0 79 17" preserveAspectRatio="none"><path d="M1 0Q4 15 9 15H68Q74 15 77 0" fill="#a3a19d" stroke="#111" stroke-width="1.500" /></svg><span>Control</span></button>
          </div>
        </section>
        <model-view></model-view>
      </main>
      <footer class="status">
        <div class="read"><span>x =&nbsp; 9.44597</span><span>y = −31.8063</span><span>z =&nbsp; 17.6659</span><span>Units: mm</span></div>
        <div class="edit">Edit: <small>パート</small></div>
        <div class="pair">
          <button aria-label="Stop editing"><svg viewBox="0 0 22 22"><rect x="1" y="1" width="20" height="20" rx="3" fill="#85837f" /><path d="M6 5l5 4 5-4 2 3-4 3 4 4-3 3-4-4-5 4-2-3 4-4-4-4z" fill="#d8d7d4" /></svg></button>
          <button aria-label="Stop options"><svg viewBox="0 0 11 7"><path d="M0 0h11L5.500 7z" fill="#66645f" /></svg></button>
        </div>
        <button aria-label="Home"><svg viewBox="0 0 22 22"><path d="M4 11h14v9H4z" fill="#d9dde0" stroke="#777" /><path d="M1 12L11 2l10 10-2 2-8-8-8 8z" fill="#d4a038" stroke="#7d5a14" /><path d="M9 12h6v8H9z" fill="#7cb6e6" /></svg></button>
        <button aria-label="Back"><svg viewBox="0 0 22 22"><path d="M1 11l10-9v5h10v8H11v5z" fill="#2f84dc" stroke="#15509c" /></svg></button>
        <div class="edge"></div>
      </footer>
    </div>`;
  }
}
